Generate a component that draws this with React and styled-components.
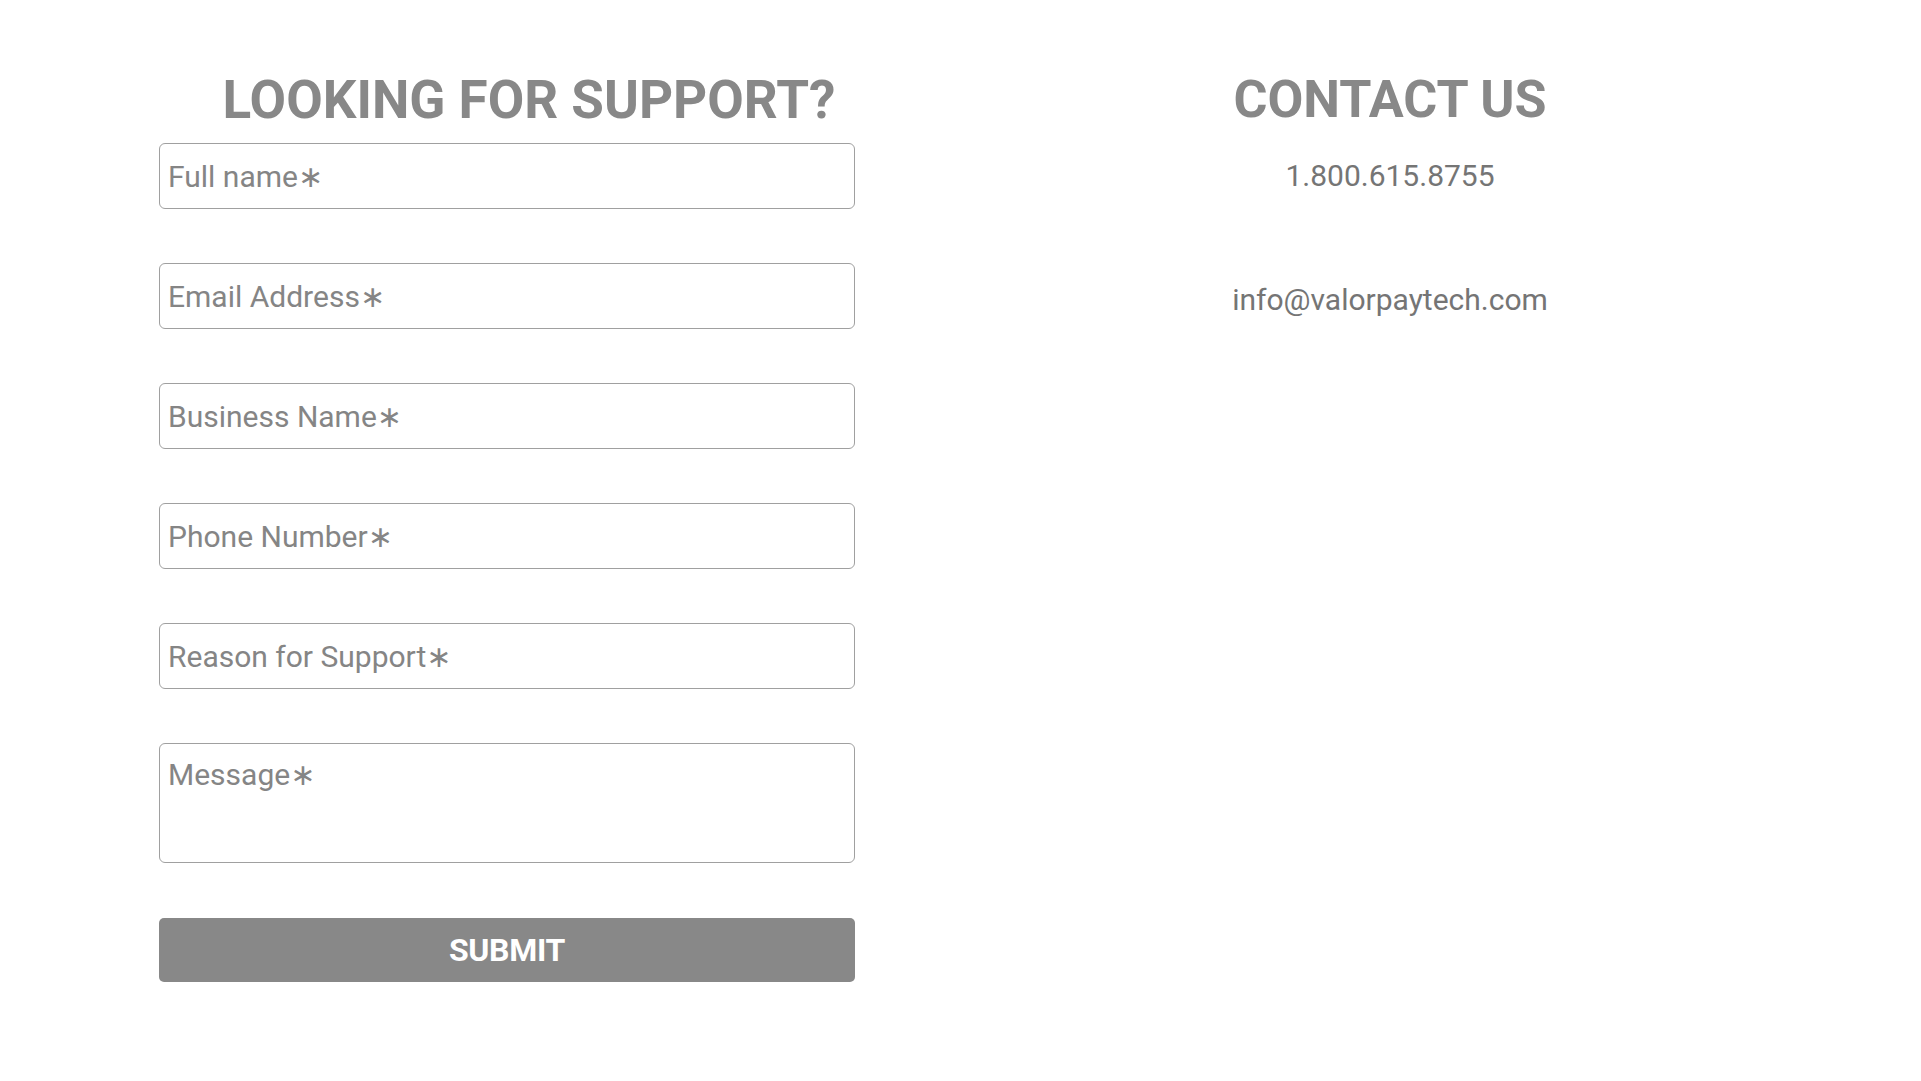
import React from "react";
import styled, { createGlobalStyle } from "styled-components";

const Global = createGlobalStyle`
  html, body { margin: 0; padding: 0; background: #ffffff; }
  body { font-family: Roboto, "Liberation Sans", Arial, sans-serif; }
  * { box-sizing: border-box; }
`;

const Page = styled.div`
  display: grid;
  grid-template-columns: 696px 744px;
  column-gap: 163px;
  padding: 69px 0 0 159px;
  min-height: 1081px;
`;

const FormColumn = styled.form`
  display: flex;
  flex-direction: column;
`;

const Heading = styled.h2`
  margin: 0;
  font-family: Roboto, "Liberation Sans", Arial, sans-serif;
  font-weight: 700;
  font-size: ${(p) => (p.$offset ? "53px" : "52px")};
  line-height: 62px;
  color: #888888;
  text-align: center;
  text-transform: uppercase;
  white-space: nowrap;
  padding-left: ${(p) => (p.$offset ? "44px" : "0")};
`;

const Fields = styled.div`
  display: flex;
  flex-direction: column;
  gap: 54px;
  margin-top: 12px;
`;

const fieldBase = `
  width: 100%;
  border: 1px solid #a0a0a0;
  border-radius: 6px;
  background: #fff;
  font-family: Roboto, "DejaVu Sans", "Liberation Sans", Arial, sans-serif;
  font-size: 30px;
  color: #7a7a7a;
  padding: 0 8px;
  outline: none;
  &::placeholder { color: #858585; opacity: 1; }
`;

const Input = styled.input`
  ${fieldBase}
  height: 66px;
`;

const TextArea = styled.textarea`
  ${fieldBase}
  height: 120px;
  padding-top: 13px;
  resize: none;
  line-height: 36px;
`;

const Submit = styled.button`
  margin-top: 55px;
  height: 64px;
  width: 100%;
  border: none;
  border-radius: 5px;
  background: #888888;
  color: #ffffff;
  font-family: Roboto, "Liberation Sans", Arial, sans-serif;
  font-weight: 700;
  font-size: 32px;
  letter-spacing: -0.3px;
  text-transform: uppercase;
  cursor: pointer;
`;

const ContactColumn = styled.div`
  display: flex;
  flex-direction: column;
  align-items: center;
`;

const ContactLine = styled.a`
  display: block;
  font-family: Roboto, "Liberation Sans", Arial, sans-serif;
  font-size: 30px;
  line-height: 40px;
  color: #757575;
  text-decoration: none;
  margin-top: ${(p) => p.$gap}px;
`;

const fields = [
  "Full name\u2217",
  "Email Address\u2217",
  "Business Name\u2217",
  "Phone Number\u2217",
  "Reason for Support\u2217",
];

export default function App() {
  return (
    <>
      <Global />
      <Page>
        <FormColumn onSubmit={(e) => e.preventDefault()}>
          <Heading $offset>Looking for support?</Heading>
          <Fields>
            {fields.map((f) => (
              <Input key={f} placeholder={f} />
            ))}
            <TextArea placeholder={"Message\u2217"} />
          </Fields>
          <Submit type="submit">Submit</Submit>
        </FormColumn>
        <ContactColumn>
          <Heading>Contact Us</Heading>
          <ContactLine $gap={25} href="tel:18006158755">1.800.615.8755</ContactLine>
          <ContactLine $gap={84} href="mailto:info@valorpaytech.com">info@valorpaytech.com</ContactLine>
        </ContactColumn>
      </Page>
    </>
  );
}
